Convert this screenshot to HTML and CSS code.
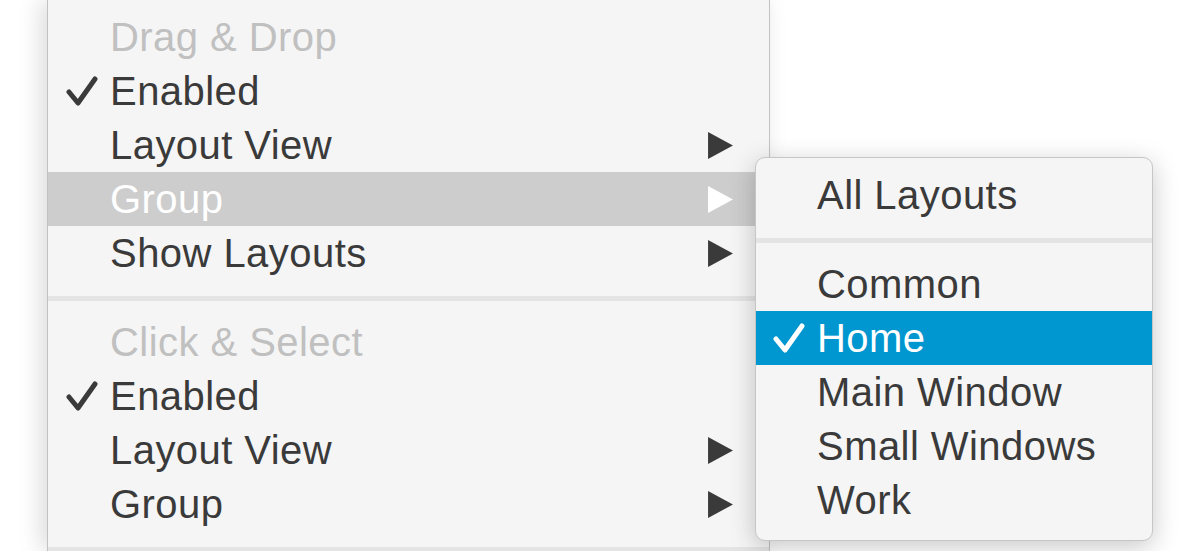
FILE: index.html
```html
<!DOCTYPE html>
<html lang="en">
<head>
  <meta charset="UTF-8" />
  <title>Layouts menu</title>
  <link rel="stylesheet" href="styles.css">
</head>
<body>

  <!-- main context menu -->
  <div class="menu">
    <div class="item header"><span class="mark"></span><span class="label">Drag &amp; Drop</span></div>
    <div class="item">
      <span class="mark"><svg class="check" viewBox="0 0 32 30"><path d="M3 16 L12 27 L29 3" /></svg></span>
      <span class="label">Enabled</span>
    </div>
    <div class="item">
      <span class="mark"></span><span class="label">Layout View</span>
      <svg class="arrow" viewBox="0 0 24 26"><polygon points="0,0 24,13 0,26" /></svg>
    </div>
    <div class="item open">
      <span class="mark"></span><span class="label">Group</span>
      <svg class="arrow" viewBox="0 0 24 26"><polygon points="0,0 24,13 0,26" /></svg>
    </div>
    <div class="item">
      <span class="mark"></span><span class="label">Show Layouts</span>
      <svg class="arrow" viewBox="0 0 24 26"><polygon points="0,0 24,13 0,26" /></svg>
    </div>

    <div class="sep"></div>

    <div class="item header"><span class="mark"></span><span class="label">Click &amp; Select</span></div>
    <div class="item">
      <span class="mark"><svg class="check" viewBox="0 0 32 30"><path d="M3 16 L12 27 L29 3" /></svg></span>
      <span class="label">Enabled</span>
    </div>
    <div class="item">
      <span class="mark"></span><span class="label">Layout View</span>
      <svg class="arrow" viewBox="0 0 24 26"><polygon points="0,0 24,13 0,26" /></svg>
    </div>
    <div class="item">
      <span class="mark"></span><span class="label">Group</span>
      <svg class="arrow" viewBox="0 0 24 26"><polygon points="0,0 24,13 0,26" /></svg>
    </div>

    <div class="sep last"></div>
  </div>

  <!-- submenu for Group -->
  <div class="submenu">
    <div class="item"><span class="mark"></span><span class="label">All Layouts</span></div>
    <div class="sep"></div>
    <div class="item"><span class="mark"></span><span class="label">Common</span></div>
    <div class="item selected">
      <span class="mark"><svg class="check" viewBox="0 0 32 30"><path d="M3 16 L12 27 L29 3" /></svg></span>
      <span class="label">Home</span>
    </div>
    <div class="item"><span class="mark"></span><span class="label">Main Window</span></div>
    <div class="item"><span class="mark"></span><span class="label">Small Windows</span></div>
    <div class="item"><span class="mark"></span><span class="label">Work</span></div>
  </div>

</body>
</html>
```

FILE: styles.css
```css
body {
  margin: 0;
  background-color: #ffffff;
  font-family: "Liberation Sans", Arial, sans-serif;
  color: #3a3a3a;
  overflow: hidden;
}

.menu {
  margin-left: 47px;
  width: 723px;
  box-sizing: border-box;
  padding-top: 10px;
  background-color: #f5f5f5;
  border-left: 1px solid #c2c2c2;
  border-right: 1px solid #c2c2c2;
  box-shadow: -6px 0 22px rgba(0,0,0,0.14);
}

.item {
  display: flex;
  align-items: center;
  height: 54px;
  padding: 0 36px 0 18px;
  font-size: 40px;
  line-height: 54px;
  letter-spacing: 0.45px;
}

.mark {
  width: 44px;
  flex: none;
  display: flex;
  align-items: center;
}

.label {
  flex: 1;
  white-space: nowrap;
}

.check {
  width: 32px;
  height: 30px;
  fill: none;
  stroke: currentColor;
  stroke-width: 5;
  stroke-linecap: round;
  stroke-linejoin: round;
}

.arrow {
  width: 25px;
  height: 27px;
  fill: currentColor;
}

.header {
  color: #c0c0c0;
}

.open {
  background-color: #cdcdcd;
  color: #ffffff;
}

.sep {
  height: 5px;
  margin: 16px 0 14px;
  background-color: #e4e4e4;
}

.sep.last {
  height: 4px;
  margin-bottom: 0;
}

.submenu {
  position: absolute;
  left: 755px;
  top: 157px;
  width: 398px;
  box-sizing: border-box;
  padding: 10px 0 13px;
  background-color: #f5f5f5;
  border: 1px solid #c6c6c6;
  border-radius: 10px;
  box-shadow: 0 6px 26px rgba(0,0,0,0.22);
  overflow: hidden;
}

.submenu .item {
  padding-left: 17px;
}

.selected {
  background-color: #0096cf;
  color: #ffffff;
}
```
